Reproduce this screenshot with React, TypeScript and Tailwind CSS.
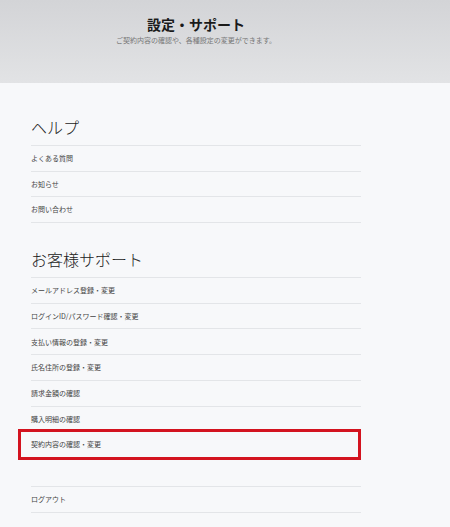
const FONT = { fontFamily: '"Noto Sans CJK JP", "Noto Sans", sans-serif' };

const help = ["よくある質問", "お知らせ", "お問い合わせ"];

const support = [
  "メールアドレス登録・変更",
  "ログインID/パスワード確認・変更",
  "支払い情報の登録・変更",
  "氏名住所の登録・変更",
  "請求金額の確認",
  "購入明細の確認",
  "契約内容の確認・変更",
];

// 強調表示する行
const HIGHLIGHT = "契約内容の確認・変更";

function Row({ label }: { label: string }) {
  const marked = label === HIGHLIGHT;
  return (
    <li className="relative flex h-[25.7px] items-center border-b border-[#e3e5e8] text-[7px] text-[#444]">
      {label}
      {marked ? (
        <span className="pointer-events-none absolute -top-[3px] -bottom-[3px] -left-[13px] right-0 border-[3px] border-[#d3131f]" />
      ) : null}
    </li>
  );
}

function Section({ title, items }: { title: string; items: string[] }) {
  return (
    <section>
      <h2 className="mb-2 text-[16px] leading-5 font-light text-[#222]">{title}</h2>
      <ul className="border-t border-[#e3e5e8]">
        {items.map((i) => (
          <Row key={i} label={i} />
        ))}
      </ul>
    </section>
  );
}

export default function App() {
  return (
    <div className="min-h-screen bg-[#f7f8fa]" style={FONT}>
      <header className="h-[83px] bg-linear-to-b from-[#d3d4d7] to-[#e2e3e5]">
        <div className="flex w-[392px] flex-col items-center pt-[14px]">
          <h1 className="text-[14px] leading-5 font-bold text-[#1a1a1a]">設定・サポート</h1>
          <p className="mt-px text-[7px] leading-[10px] text-[#777]">
            ご契約内容の確認や、各種設定の変更ができます。
          </p>
        </div>
      </header>

      <main className="ml-[31px] w-[330px] pt-[34px]">
        <Section title="ヘルプ" items={help} />
        <div className="h-[26px]" />
        <Section title="お客様サポート" items={support} />
        <ul className="mt-[28px] border-t border-[#e3e5e8]">
          <Row label="ログアウト" />
        </ul>
      </main>
    </div>
  );
}
